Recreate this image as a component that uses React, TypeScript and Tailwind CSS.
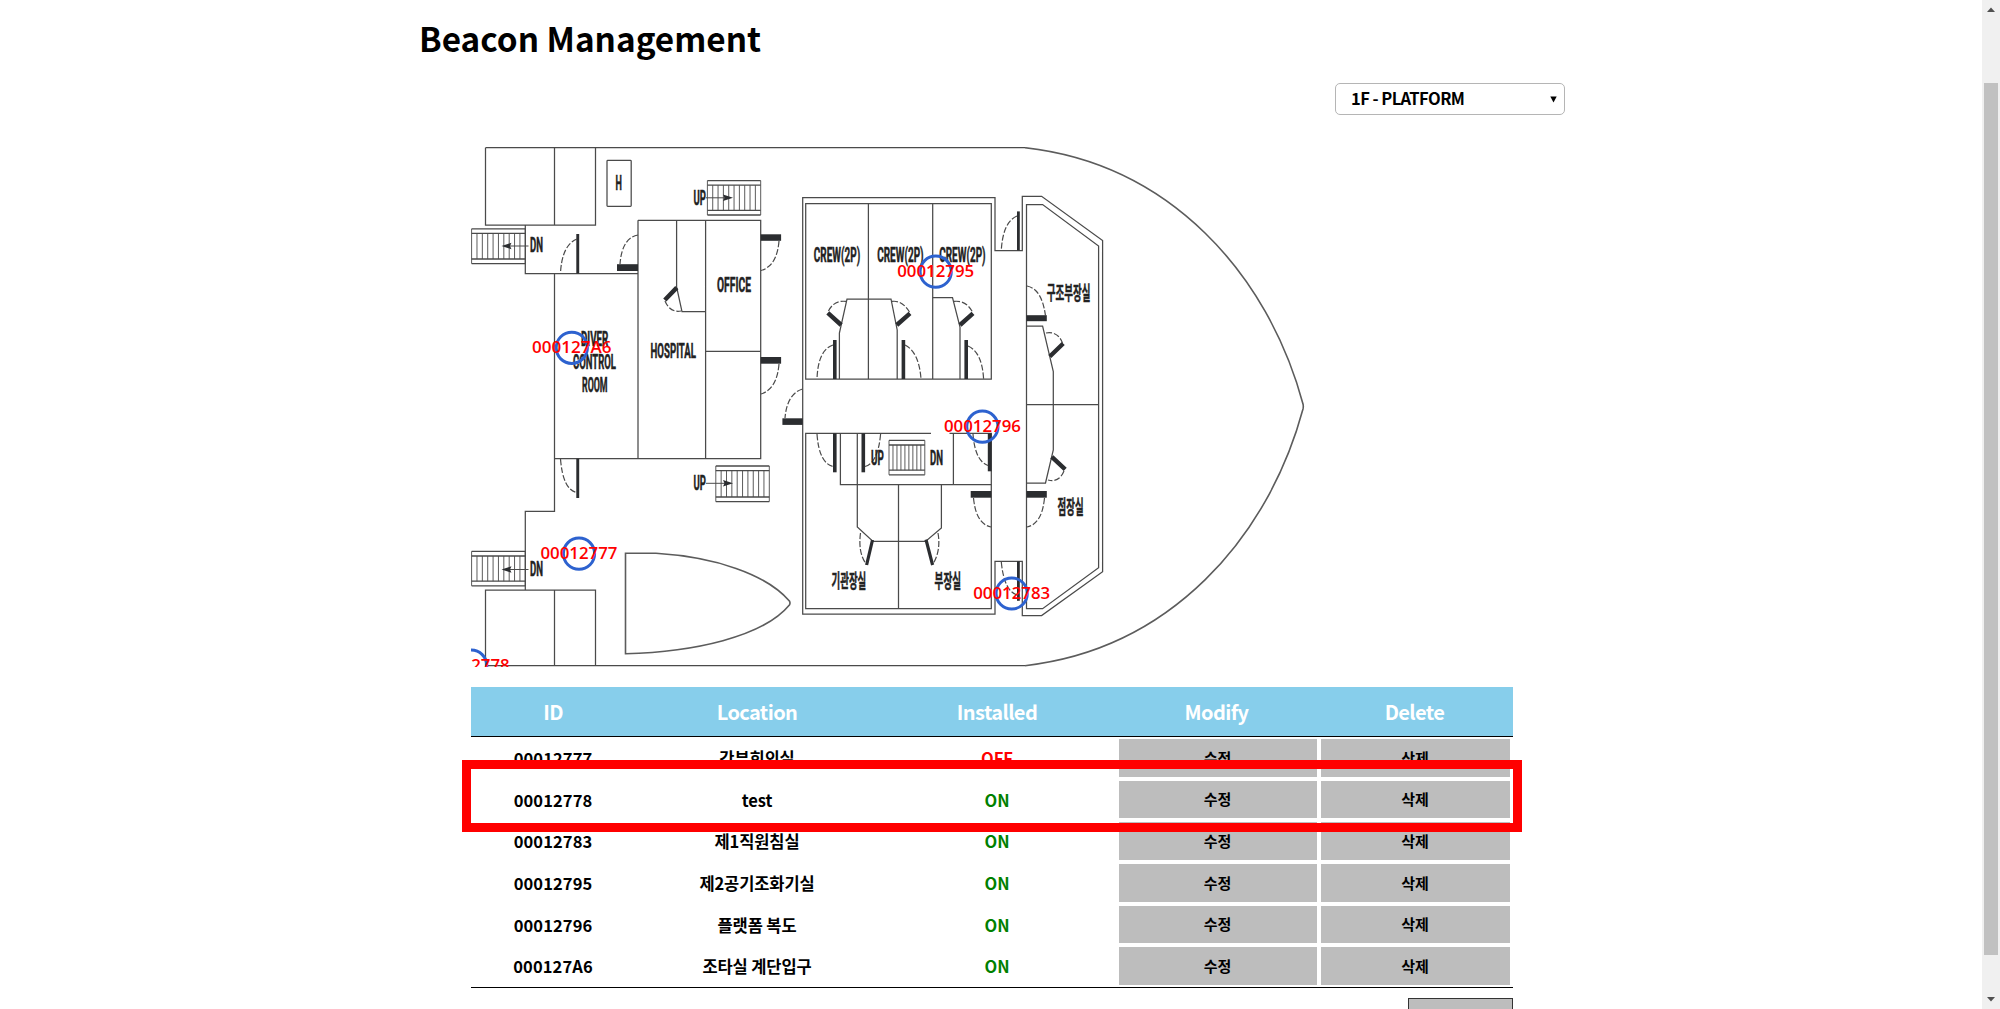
import React from "react";

const INK = "#4a4a4a";
const DARK = "#2b2d30";

const walls = [
  "M485.5 147.7H1025",
  "M485.5 665.7H1025",
  "M485.5 147.7V225H595.5V147.7M554.5 147.7V225",
  "M525.3 225V273.5H638M554.5 273.5V511.3H525.3V590",
  "M638 220.3H760.7V458.7H554.5M638 220.3V458.7",
  "M676.6 220.3V287L682 311.6H705.6M705.6 220.3V458.7M705.6 351.3H760.7",
  "M485.5 665.7V590H595.5V665.7M554.5 590V665.7",
  "M802.7 197.7H995V250.5H1022.3V196.3H1041.6L1102.6 240.5V571.7L1041.6 615.5H1022.3V561.3H995V614H802.7Z",
  "M805.7 203.5H991.3V379H805.7ZM868.4 203.5V379M932.7 203.5V379",
  "M931 433.3H805.7V608.7H991.3V433.3H949.5",
  "M840.4 433.3V484.5H991.3M953.4 433.3V484.5M898.5 484.5V608.7",
  "M857.3 433.3V527L873 541.4H925.5L941.4 528V484.5",
  "M1026.5 204.5H1042.6L1098.6 246V567.7L1042.6 608.7H1026.5ZM1026.5 404.6H1098.6",
  "M1026.5 326H1042.6L1053.3 371.5V450L1045.5 483H1026.5",
  "M839.4 379V333L847 299H891L897.2 330V379",
  "M932.7 297.5H952.5L960 327V379",
];

const hull = [
  "M1025 147.7C1170 164 1268 274 1303 404Q1303.6 406.3 1303 409C1268 538.6 1170 649 1025 665.7",
  "M656 553.3H625.5V653.7C693 652 763 637 789.4 605Q790.6 603 789.4 601C766 574 715 557 656 553.3",
];

/* door leaves: x, y, width, height */
const leaves: [number, number, number, number][] = [
  [576.3, 234, 2.9, 39.5],
  [617, 264.2, 21, 6.8],
  [760.7, 234.3, 20.4, 6.5],
  [760.7, 357, 20.4, 6.7],
  [782.4, 418.3, 20.3, 6.6],
  [576.3, 458.7, 2.9, 39.3],
  [833, 340, 3.6, 39],
  [901.6, 340, 3.6, 39],
  [964.4, 340, 3.6, 39],
  [1017, 211.4, 2.8, 39],
  [1026.5, 315.2, 20.3, 6],
  [970.7, 491, 20.6, 6.7],
  [1026.5, 491, 20.3, 6.7],
  [833, 433.3, 3.6, 39],
  [861.5, 433.3, 3.6, 39],
  [987.8, 433.3, 3.8, 38],
  [1017, 561.3, 2.8, 39.5],
];

const tiltedLeaves =
  "M676.8 287.6L664.8 300M827.8 312.8L841.2 325M896.8 325L910 313.4M960 325L973 313.4M1049.8 356.5L1063.2 343.5M1051.8 456.8L1065.2 469.4";
const slimLeaves = "M872.5 540L866.6 565M926 539.6L932.6 565";

const swings = [
  "M577 239Q562 245 560.5 273",
  "M638 235Q622 238 620 264",
  "M779 241Q777 266 761 270.5",
  "M779 364Q777 389 761 394",
  "M802.5 389Q787 394 785 418",
  "M560.5 459Q563 490 577 492.5",
  "M665 301Q670 313 681 311",
  "M828.5 311Q834 300 846 301.4",
  "M892 301.4Q902 300 909.5 312",
  "M954 301.4Q966 300 972.5 312",
  "M833 345Q818 350 817 379",
  "M905 345Q919 352 921 379",
  "M968 346Q982 352 983.6 379",
  "M1017 216Q1003 222 1001.3 250",
  "M1027 286Q1042 289 1045.5 316",
  "M1046 333Q1058 331 1062.5 343",
  "M1064 471Q1059 483 1048 480",
  "M973.5 498Q976 524 991 527",
  "M1044.5 498Q1042 524 1027 527",
  "M817 434Q819 463 833 466.5",
  "M880.6 434Q878 463 865 466.5",
  "M973 434Q975 461 988 465.5",
  "M860.5 533Q858 552 865.5 563",
  "M938 533Q941 550 933.5 563",
  "M1001.3 562Q1004 590 1016 594.5",
];

function Stairs({ x, y, w, h, treads }: { x: number; y: number; w: number; h: number; treads: number }) {
  const step = w / treads;
  return (
    <g stroke={INK} fill="none">
      <path d={`M${x} ${y}h${w}M${x} ${y + 4.6}h${w}M${x} ${y + h - 4.6}h${w}M${x} ${y + h}h${w}`} strokeWidth={1.3} />
      <path d={`M${x} ${y}v${h}M${x + w} ${y}v${h}`} strokeWidth={0.9} />
      {Array.from({ length: treads - 1 }, (_, i) => (
        <path key={i} d={`M${x + step * (i + 1)} ${y + 4.6}v${h - 9.2}`} strokeWidth={0.9} />
      ))}
    </g>
  );
}

function Arrow({ x, y, dir }: { x: number; y: number; dir: 1 | -1 }) {
  return (
    <g>
      <path d={`M${x} ${y}h${dir * 22}`} stroke={INK} strokeWidth={1} />
      <path d={`M${x + dir * 27} ${y}l${dir * -10} -3.2l${dir * 1.5} 3.2l${dir * -1.5} 3.2z`} fill={DARK} />
    </g>
  );
}

/* room captions: text, left, baseline, width */
const captions: [string, number, number, number][] = [
  ["H", 615.6, 189.8, 6.4],
  ["DN", 530, 252.3, 13],
  ["DN", 530, 575.6, 13],
  ["UP", 693.5, 205, 12.4],
  ["UP", 693.5, 490.2, 12.4],
  ["OFFICE", 717, 292.3, 34],
  ["HOSPITAL", 650.5, 358, 45.5],
  ["DIVER", 581, 346.4, 27.4],
  ["CONTROL", 573, 369.4, 43],
  ["ROOM", 582, 392.3, 25.6],
  ["CREW(2P)", 813.8, 262.2, 46.4],
  ["CREW(2P)", 877.2, 262.2, 46.4],
  ["CREW(2P)", 939.2, 262.2, 46.4],
  ["UP", 871, 464.6, 12.8],
  ["DN", 930, 464.6, 13],
];

const koCaptions: [string, number, number, number][] = [
  ["구조부장실", 1046.8, 300, 43.6],
  ["점장실", 1057.6, 513.8, 26],
  ["기관장실", 831.6, 588, 34.6],
  ["부장실", 934.6, 588, 26.4],
];

/* beacon id, centre x, centre y, label width */
const markers: [string, number, number, number][] = [
  ["000127A6", 571.8, 347.8, 79.5],
  ["00012777", 579, 553.7, 77],
  ["00012778", 471.2, 665.7, 77],
  ["00012795", 935.7, 271.7, 77],
  ["00012796", 982.4, 426.7, 77],
  ["00012783", 1011.7, 593.5, 77],
];

function DeckPlan() {
  return (
    <svg className="block h-[520px] w-[1042px]" viewBox="471 147 1042 520" fill="none">
      <g stroke={INK} strokeWidth={1.25}>
        {walls.map((d) => (
          <path key={d} d={d} />
        ))}
        {hull.map((d) => (
          <path key={d} d={d} stroke="#5c5c5c" strokeWidth={1.6} />
        ))}
        <rect x={607} y={160.4} width={24.2} height={46} rx={0.8} />
      </g>
      <Stairs x={471.6} y={228.8} w={53.7} h={34.8} treads={10} />
      <Stairs x={471.6} y={551.4} w={53.7} h={34.4} treads={10} />
      <Stairs x={707.4} y={180.6} w={53.3} h={34.4} treads={10} />
      <Stairs x={715.8} y={466} w={53.5} h={35.6} treads={10} />
      <Stairs x={889} y={440.4} w={35.8} h={34.4} treads={9} />
      <Arrow x={528.5} y={246} dir={-1} />
      <Arrow x={528.5} y={569.5} dir={-1} />
      <Arrow x={706} y={197.8} dir={1} />
      <Arrow x={706} y={483.3} dir={1} />
      <g fill={DARK}>
        {leaves.map(([x, y, w, h], i) => (
          <rect key={i} x={x} y={y} width={w} height={h} />
        ))}
      </g>
      <path d={tiltedLeaves} stroke={DARK} strokeWidth={4.4} />
      <path d={slimLeaves} stroke={DARK} strokeWidth={3.2} />
      <g stroke={INK} strokeWidth={1.2} strokeDasharray="6 2">
        {swings.map((d) => (
          <path key={d} d={d} />
        ))}
      </g>
      <g fill="#222" stroke="#222" strokeWidth={0.5} className="font-['Roboto',sans-serif] text-[20.5px] font-bold">
        {captions.map(([t, x, y, w], i) => (
          <text key={i} x={x} y={y} textLength={w} lengthAdjust="spacingAndGlyphs">
            {t}
          </text>
        ))}
      </g>
      <g fill="#222" stroke="#222" strokeWidth={0.5} className="font-['Noto_Sans_CJK_KR',sans-serif] text-[19px] font-bold">
        {koCaptions.map(([t, x, y, w]) => (
          <text key={t} x={x} y={y} textLength={w} lengthAdjust="spacingAndGlyphs">
            {t}
          </text>
        ))}
      </g>
      {markers.map(([id, x, y, w]) => (
        <g key={id}>
          <circle cx={x} cy={y} r={15.6} stroke="#2d62cf" strokeWidth={3} />
          <text
            x={x - w / 2}
            y={y + 5.3}
            fill="#ff0000"
            textLength={w}
            lengthAdjust="spacingAndGlyphs"
            className="font-['Open_Sans',sans-serif] text-[16.5px] font-semibold"
          >
            {id}
          </text>
        </g>
      ))}
    </svg>
  );
}

const rows = [
  { id: "00012777", location: "간부회의실", on: false },
  { id: "00012778", location: "test", on: true },
  { id: "00012783", location: "제1직원침실", on: true },
  { id: "00012795", location: "제2공기조화기실", on: true },
  { id: "00012796", location: "플랫폼 복도", on: true },
  { id: "000127A6", location: "조타실 계단입구", on: true },
];

function BeaconTable() {
  return (
    <div className="relative mt-5 w-[1042px] text-center">
      <div className="grid h-[50px] grid-cols-[164px_244px_236px_203px_193px] items-center border-b border-black bg-[#87ceeb] text-xl font-bold tracking-[-0.6px] text-white">
        {["ID", "Location", "Installed", "Modify", "Delete"].map((h) => (
          <div key={h}>{h}</div>
        ))}
      </div>
      <div className="border-b border-black">
        {rows.map((r) => (
          <div
            key={r.id}
            className="grid h-[41.66px] grid-cols-[164px_244px_236px_204px_193px] items-center text-[16.5px] font-bold"
          >
            <div className="pt-px tracking-[0.1px]">{r.id}</div>
            <div className="pt-px tracking-[-0.1px]">{r.location}</div>
            <div className={r.on ? "pt-px text-[#008000]" : "pt-px text-[#ff0000]"}>{r.on ? "ON" : "OFF"}</div>
            <button className="mr-0.5 ml-1 h-[37.6px] bg-[#bdbdbd] pr-px text-[15px]">수정</button>
            <button className="mr-0.5 ml-0.5 h-[37.6px] bg-[#bdbdbd] pr-px text-[15px]">삭제</button>
          </div>
        ))}
      </div>
      <div className="absolute top-[73px] -left-[9px] h-[72px] w-[1060px] border-9 border-[#ff0000]" />
    </div>
  );
}

export default function App() {
  return (
    <div className="flex h-[1009px] w-[2000px] overflow-hidden bg-white font-['Noto_Sans_CJK_KR',sans-serif] text-black">
      <main className="flex-1 pl-[419px]">
        <div className="flex h-[147px] w-[1146px] flex-col">
          <h1 className="mt-3.5 h-12 text-[33.3px] leading-[48px] font-bold">Beacon Management</h1>
          <button className="mt-[21px] flex h-8 w-[230px] items-center justify-between self-end rounded-[5px] border border-[#b5b5b5] pr-[7px] pl-[15px] text-[16.5px] font-bold tracking-[-0.55px]">
            <span className="-mt-0.5">1F - PLATFORM</span>
            <svg className="h-[7px] w-[7px]" viewBox="0 0 7 7">
              <path d="M0.3 0.5H6.7L3.5 6.5Z" fill="#000" />
            </svg>
          </button>
        </div>
        <div className="ml-[52px] w-[1042px]">
          <DeckPlan />
          <BeaconTable />
          <button className="mt-[10px] ml-auto block h-[38px] w-[105px] border border-[#333] bg-[#bdbdbd]" aria-label="Add" />
        </div>
      </main>
      <div className="flex w-[18px] flex-col items-center bg-[#f0f0f0]">
        <svg className="mt-[7px] h-[5px] w-2" viewBox="0 0 8 5">
          <path d="M0 5H8L4 0.5Z" fill="#505050" />
        </svg>
        <div className="mt-[71px] h-[872px] w-[14px] bg-[#c1c1c1]" />
        <svg className="mt-[42px] h-[5px] w-2" viewBox="0 0 8 5">
          <path d="M0 0H8L4 4.5Z" fill="#505050" />
        </svg>
      </div>
    </div>
  );
}
